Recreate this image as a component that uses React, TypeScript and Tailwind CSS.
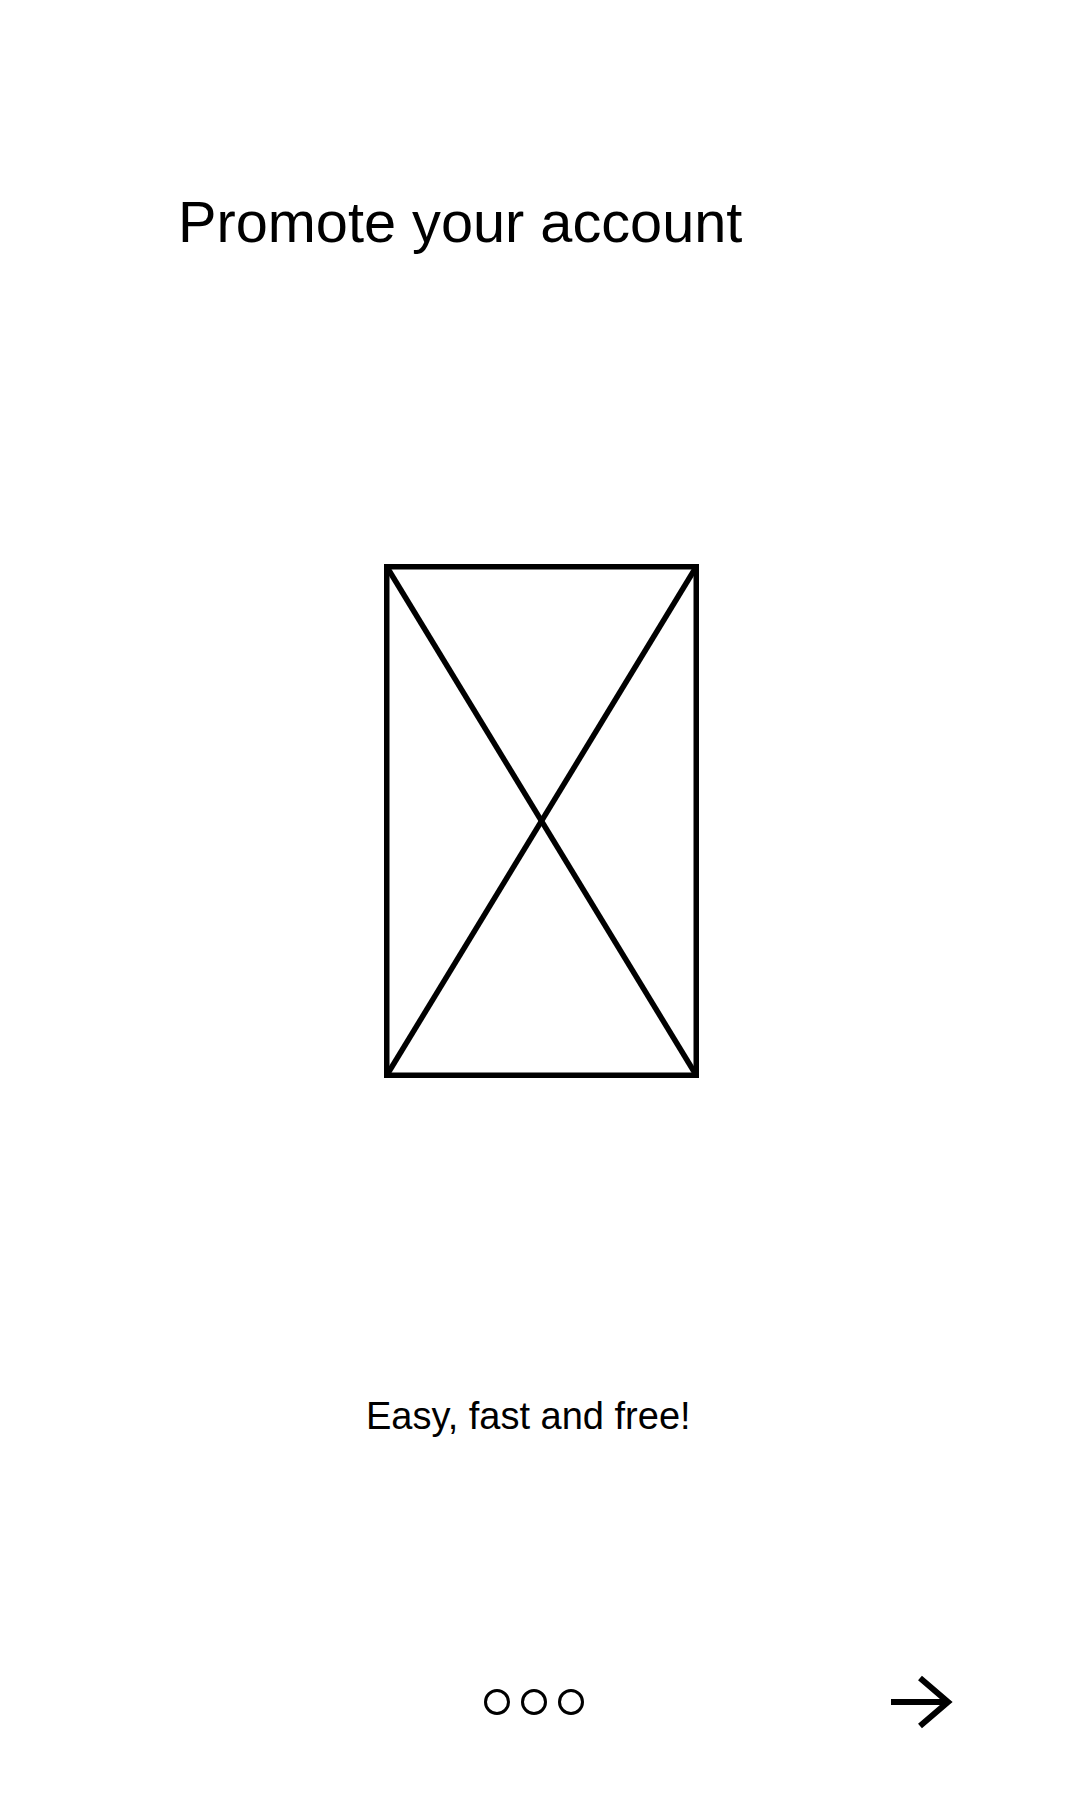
import React from 'react';

function Placeholder() {
  return (
    <svg width="315" height="514" viewBox="0 0 315 514" className="block">
      <rect x="2.75" y="2.75" width="309.5" height="508.5" fill="none" stroke="#000" strokeWidth="5.5" />
      <line x1="2.75" y1="2.75" x2="312.25" y2="511.25" stroke="#000" strokeWidth="5.5" />
      <line x1="312.25" y1="2.75" x2="2.75" y2="511.25" stroke="#000" strokeWidth="5.5" />
    </svg>
  );
}

function ArrowRight() {
  return (
    <svg width="64" height="56" viewBox="0 0 64 56" className="block">
      <path d="M2 28 H58" stroke="#000" strokeWidth="6" fill="none" />
      <path d="M31 4 L59 28 L31 52" stroke="#000" strokeWidth="6" fill="none" strokeLinejoin="miter" />
    </svg>
  );
}

export default function App() {
  return (
    <div className="w-[1080px] h-[1800px] bg-white text-black flex flex-col font-['Liberation_Sans',Arial,sans-serif]">
      <h1 className="mt-[194px] ml-[178px] text-[57.7px] leading-none font-normal">Promote your account</h1>

      <div className="mt-[312px] ml-[384px]">
        <Placeholder />
      </div>

      <p className="mt-[319px] ml-[366px] text-[38px] leading-none">Easy, fast and free!</p>

      <div className="mt-[239px] h-[56px] flex items-center">
        <div className="ml-[484px] flex gap-[11px]">
          <span className="w-[26px] h-[26px] rounded-full border-[3px] border-black" />
          <span className="w-[26px] h-[26px] rounded-full border-[3px] border-black" />
          <span className="w-[26px] h-[26px] rounded-full border-[3px] border-black" />
        </div>
        <button className="ml-[305px]">
          <ArrowRight />
        </button>
      </div>
    </div>
  );
}
